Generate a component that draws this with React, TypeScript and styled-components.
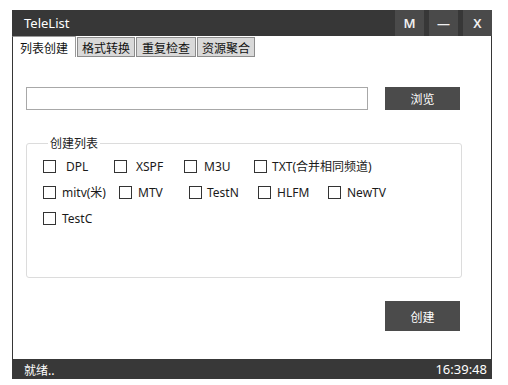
import React from "react";
import styled, { createGlobalStyle } from "styled-components";

const Global = createGlobalStyle`
  html, body { margin: 0; padding: 0; background: #ffffff; }
  body { font-family: "Noto Sans", "Noto Sans CJK SC", sans-serif; }
`;

const Page = styled.div`
  padding: 10px 16px 0 12px;
`;

const Window = styled.div`
  width: 480px;
  height: 369px;
  box-sizing: border-box;
  border: 1px solid #363636;
  border-top: none;
  display: flex;
  flex-direction: column;
  background: #ffffff;
`;

const TitleBar = styled.div`
  height: 26px;
  background: #373737;
  display: flex;
  align-items: center;
  margin: 0 -1px;
  padding-left: 12px;
`;

const Title = styled.div`
  flex: 1;
  color: #ffffff;
  font-family: "Noto Sans", "Noto Sans CJK SC", sans-serif;
  font-size: 13px;
`;

const WinButtons = styled.div`
  display: flex;
  gap: 5px;
  height: 100%;
`;

const WinButton = styled.div`
  width: 29px;
  height: 100%;
  background: #4a4a4a;
  color: #f0f0f0;
  display: flex;
  align-items: center;
  justify-content: center;
  font-family: "Noto Sans", sans-serif;
  font-size: 13px;
  font-weight: 600;
`;

const TabStrip = styled.div`
  height: 21px;
  display: flex;
  align-items: flex-end;
  margin-left: -1px;
`;

const Tab = styled.div<{ $active?: boolean; $w: number }>`
  box-sizing: border-box;
  width: ${(p) => p.$w}px;
  height: ${(p) => (p.$active ? 21 : 20)}px;
  background: ${(p) => (p.$active ? "#ffffff" : "#d9d9d9")};
  border: 1px solid ${(p) => (p.$active ? "#9a9a9a" : "#8c8c8c")};
  border-bottom: ${(p) => (p.$active ? "none" : "1px solid #8c8c8c")};
  border-left-color: ${(p) => (p.$active ? "#363636" : "#8c8c8c")};
  margin-right: 1px;
  display: flex;
  align-items: center;
  justify-content: center;
  font-family: "Noto Sans CJK SC", sans-serif;
  font-size: 12px;
  color: #111;
`;

const Body = styled.div`
  flex: 1;
  display: flex;
  flex-direction: column;
  padding: 30px 30px 0 13px;
`;

const InputRow = styled.div`
  display: flex;
  align-items: center;
  gap: 17px;
`;

const PathInput = styled.div`
  box-sizing: border-box;
  width: 342px;
  height: 23px;
  border: 1px solid #a8a8a8;
  background: #fff;
`;

const DarkButton = styled.div<{ $h: number }>`
  width: 75px;
  height: ${(p) => p.$h}px;
  background: #4b4b4b;
  color: #ffffff;
  display: flex;
  align-items: center;
  justify-content: center;
  font-family: "Noto Sans CJK SC", sans-serif;
  font-size: 12px;
`;

const Group = styled.fieldset`
  box-sizing: border-box;
  width: 436px;
  height: 143px;
  margin: 25px 0 0 0;
  padding: 5px 0 0 16px;
  border: 1px solid #dcdcdc;
  border-radius: 3px;
  display: flex;
  flex-direction: column;
  gap: 6px;
`;

const Legend = styled.legend`
  padding: 0 2px;
  margin-left: 5px;
  font-family: "Noto Sans CJK SC", sans-serif;
  font-size: 12px;
  line-height: 16px;
  color: #222;
`;

const Row = styled.div`
  display: flex;
  height: 20px;
  align-items: center;
`;

const Item = styled.div<{ $w?: number; $gap: number }>`
  display: flex;
  align-items: center;
  gap: ${(p) => p.$gap}px;
  width: ${(p) => (p.$w ? `${p.$w}px` : "auto")};
  flex-shrink: 0;
  font-family: "Noto Sans", "Noto Sans CJK SC", sans-serif;
  font-size: 12px;
  color: #1a1a1a;
`;

const Box = styled.span`
  box-sizing: border-box;
  width: 13px;
  height: 13px;
  border: 1px solid #333;
  background: #fff;
  flex-shrink: 0;
`;

const CreateRow = styled.div`
  display: flex;
  justify-content: flex-end;
  margin-top: 23px;
  padding-right: 1px;
`;

const StatusBar = styled.div`
  height: 20px;
  background: #383838;
  margin: 0 -1px -1px -1px;
  display: flex;
  align-items: center;
  justify-content: space-between;
  padding: 0 5px 0 12px;
  color: #ffffff;
  font-family: "Noto Sans CJK SC", sans-serif;
  font-size: 12px;
`;

const Time = styled.span`
  font-family: "Noto Sans", sans-serif;
  font-size: 13px;
`;

type Opt = { label: string; w?: number; gap: number };

const rows: Opt[][] = [
  [
    { label: "DPL", w: 71, gap: 10 },
    { label: "XSPF", w: 70, gap: 9 },
    { label: "M3U", w: 70, gap: 7 },
    { label: "TXT(合并相同频道)", gap: 5 },
  ],
  [
    { label: "mitv(米)", w: 76, gap: 6 },
    { label: "MTV", w: 70, gap: 6 },
    { label: "TestN", w: 69, gap: 5 },
    { label: "HLFM", w: 70, gap: 6 },
    { label: "NewTV", gap: 6 },
  ],
  [{ label: "TestC", gap: 6 }],
];

export default function App() {
  return (
    <Page>
      <Global />
      <Window>
        <TitleBar>
          <Title>TeleList</Title>
          <WinButtons>
            <WinButton>M</WinButton>
            <WinButton>—</WinButton>
            <WinButton>X</WinButton>
          </WinButtons>
        </TitleBar>
        <TabStrip>
          <Tab $active $w={64}>列表创建</Tab>
          <Tab $w={58}>格式转换</Tab>
          <Tab $w={60}>重复检查</Tab>
          <Tab $w={58}>资源聚合</Tab>
        </TabStrip>
        <Body>
          <InputRow>
            <PathInput />
            <DarkButton $h={23}>浏览</DarkButton>
          </InputRow>
          <Group>
            <Legend>创建列表</Legend>
            {rows.map((r, i) => (
              <Row key={i}>
                {r.map((o) => (
                  <Item key={o.label} $w={o.w} $gap={o.gap}>
                    <Box />
                    {o.label}
                  </Item>
                ))}
              </Row>
            ))}
          </Group>
          <CreateRow>
            <DarkButton $h={30}>创建</DarkButton>
          </CreateRow>
        </Body>
        <StatusBar>
          <span>就绪..</span>
          <Time>16:39:48</Time>
        </StatusBar>
      </Window>
    </Page>
  );
}
